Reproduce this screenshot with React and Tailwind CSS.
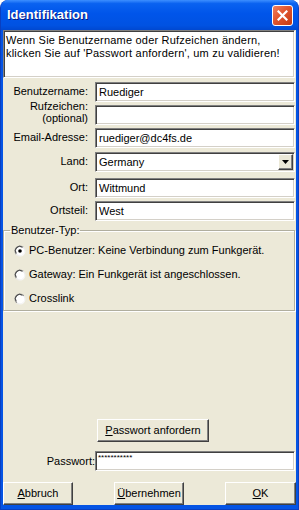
import React from 'react';

const sunken =
  'border border-t-[#808080] border-l-[#808080] border-b-white border-r-white shadow-[inset_1px_1px_0_#404040,inset_-1px_-1px_0_#D4D0C8] bg-white';
const raised =
  'border border-t-white border-l-white border-b-[#404040] border-r-[#404040] shadow-[inset_-1px_-1px_0_#808080] bg-[#ECE9D8]';

function Radio({ checked }) {
  return (
    <svg width="12" height="12" viewBox="0 0 12 12" className="shrink-0">
      <defs>
        <linearGradient id="rg" x1="0" y1="0" x2="1" y2="1">
          <stop offset="0" stopColor="#808080" />
          <stop offset="0.5" stopColor="#9a9a9a" />
          <stop offset="0.5" stopColor="#e8e8e8" />
          <stop offset="1" stopColor="#ffffff" />
        </linearGradient>
      </defs>
      <circle cx="6" cy="6" r="5.5" fill="url(#rg)" />
      <circle cx="6" cy="6" r="4.3" fill="#ffffff" />
      <path d="M2.2 8.2 A4.3 4.3 0 0 1 8.2 2.2" stroke="#404040" strokeWidth="1" fill="none" />
      {checked && <circle cx="6" cy="6" r="1.8" fill="#000000" />}
    </svg>
  );
}

function Field({ label, value }) {
  return (
    <div className="flex items-start">
      <div className="w-[85px] text-right pt-[3px] leading-[13px]">{label}</div>
      <div className={`ml-[7px] mr-[1px] flex-1 h-[20px] flex items-center pl-[3px] ${sunken}`}>{value}</div>
    </div>
  );
}

export default function App() {
  return (
    <div className="w-[299px] h-[510px] bg-white font-['Liberation_Sans',Arial,sans-serif] text-[11px] text-black">
      <div className="w-full h-full flex flex-col rounded-t-[8px] overflow-hidden bg-[#0554E4] border-x border-b border-[#0A3FC0]">
        {/* Titelleiste */}
        <div className="h-[30px] shrink-0 flex items-center justify-between pl-[6px] pr-[5px] bg-[linear-gradient(to_bottom,#3D8FFF_0%,#0A62F0_12%,#0055EA_45%,#0052E2_85%,#0048D0_100%)]">
          <span className="text-white font-bold text-[13px] [text-shadow:1px_1px_0_#0A1A80]">Identifikation</span>
          <div className="w-[21px] h-[21px] rounded-[3px] border border-white bg-[linear-gradient(135deg,#F08060_0%,#E0552E_45%,#C53A12_100%)] flex items-center justify-center">
            <svg width="11" height="11" viewBox="0 0 11 11">
              <path d="M1.5 1.5 L9.5 9.5 M9.5 1.5 L1.5 9.5" stroke="#ffffff" strokeWidth="2.2" strokeLinecap="square" />
            </svg>
          </div>
        </div>

        {/* Inhalt */}
        <div className="flex-1 mx-[2px] mb-[4px] bg-[#ECE9D8] flex flex-col">
          <div className={`h-[48px] mr-[1px] px-[2px] pt-[3px] leading-[13px] tracking-[0.2px] ${sunken}`}>
            Wenn Sie Benutzername oder Rufzeichen ändern,
            <br />
            klicken Sie auf 'Passwort anfordern', um zu validieren!
          </div>

          <div className="mt-[4px]">
            <Field label="Benutzername:" value="Ruediger" />
          </div>
          <div className="mt-[3px] flex items-start">
            <div className="w-[85px] text-right leading-[12px] -mt-[5px]">
              Rufzeichen:
              <br />
              (optional)
            </div>
            <div className={`ml-[7px] mr-[1px] flex-1 h-[20px] ${sunken}`} />
          </div>
          <div className="mt-[3px]">
            <Field label="Email-Adresse:" value="ruediger@dc4fs.de" />
          </div>
          <div className="mt-[4px] flex items-start">
            <div className="w-[85px] text-right pt-[1px]">Land:</div>
            <div className={`ml-[7px] mr-[1px] flex-1 h-[20px] flex items-center justify-between pl-[3px] pr-[1px] ${sunken}`}>
              <span>Germany</span>
              <div className={`w-[15px] h-[16px] flex items-center justify-center ${raised}`}>
                <svg width="7" height="4" viewBox="0 0 7 4">
                  <path d="M0 0 H7 L3.5 4 Z" fill="#000000" />
                </svg>
              </div>
            </div>
          </div>
          <div className="mt-[6px]">
            <Field label="Ort:" value="Wittmund" />
          </div>
          <div className="mt-[3px]">
            <Field label="Ortsteil:" value="West" />
          </div>

          {/* Benutzer-Typ */}
          <fieldset className="mt-[3px] mr-[1px] h-[87px] border border-[#B0AE9E] shadow-[inset_1px_1px_0_#ffffff,1px_1px_0_#ffffff] px-[10px]">
            <legend className="-ml-[4px] px-[1px] leading-[13px]">Benutzer-Typ:</legend>
            <div className="flex flex-col gap-[11px] mt-[7px]">
              <label className="flex items-center gap-[3px] leading-[13px]">
                <Radio checked />
                <span>PC-Benutzer: Keine Verbindung zum Funkgerät.</span>
              </label>
              <label className="flex items-center gap-[3px] leading-[13px]">
                <Radio />
                <span>Gateway: Ein Funkgerät ist angeschlossen.</span>
              </label>
              <label className="flex items-center gap-[3px] leading-[13px]">
                <Radio />
                <span>Crosslink</span>
              </label>
            </div>
          </fieldset>

          <div className="mt-auto flex pl-[94px]">
            <button className={`w-[112px] h-[23px] ${raised}`}>
              <span className="underline">P</span>asswort anfordern
            </button>
          </div>
          <div className="mt-[9px] flex items-center">
            <div className="w-[92px] text-right">Passwort:</div>
            <div className={`mr-[1px] flex-1 h-[20px] pl-[2px] text-[8px] leading-[12px] ${sunken}`}>***********</div>
          </div>
          <div className="mt-[11px] flex justify-between">
            <button className={`w-[70px] h-[23px] ${raised}`}>
              <span className="underline">A</span>bbruch
            </button>
            <button className={`w-[70px] h-[23px] ${raised}`}>
              <span className="underline">Ü</span>bernehmen
            </button>
            <button className={`w-[71px] h-[23px] ${raised}`}>
              <span className="underline">O</span>K
            </button>
          </div>
        </div>
      </div>
    </div>
  );
}
